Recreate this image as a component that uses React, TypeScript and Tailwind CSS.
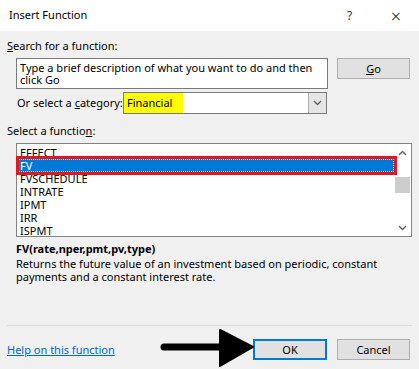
import React from 'react'

const functions = ['EFFECT', 'FV', 'FVSCHEDULE', 'INTRATE', 'IPMT', 'IRR', 'ISPMT']

const Chevron = ({ up }: { up?: boolean }) => (
  <svg width="9" height="6" viewBox="0 0 9 6" className="block">
    <path
      d={up ? 'M1 5 L4.5 1.5 L8 5' : 'M1 1 L4.5 4.5 L8 1'}
      fill="none"
      stroke="#606060"
      strokeWidth="1.4"
    />
  </svg>
)

const Button = ({ children, primary }: { children: React.ReactNode; primary?: boolean }) => (
  <button
    className={
      primary
        ? 'w-[74px] h-[21px] bg-[#e1e1e1] border-2 border-[#0078d7] text-[11px] leading-none'
        : 'w-[73px] h-[21px] bg-[#e1e1e1] border border-[#adadad] text-[11px] leading-none'
    }
  >
    {children}
  </button>
)

export default function App() {
  return (
    <div
      className="relative w-[419px] h-[369px] overflow-hidden bg-[#f0f0f0] text-black text-[11px] whitespace-nowrap"
      style={{ fontFamily: '"Noto Sans", "Open Sans", sans-serif' }}
    >
      {/* Title bar */}
      <div className="h-[31px] bg-white flex items-center pl-[9px]">
        <span className="flex-1">Insert Function</span>
        <span className="w-[10px] text-center text-[12px] text-[#333]">?</span>
        <span className="ml-[36px] mr-[18px] text-[18px] font-light leading-none text-[#222]">×</span>
      </div>

      <div className="px-[7px]">
        <div className="mt-[7px] leading-[15px]">
          <span className="underline">S</span>earch for a function:
        </div>

        <div className="mt-[5px] flex items-start">
          <div className="ml-[9px] w-[312px] h-[31px] bg-white border border-[#7a7a7a] px-[3px] pt-[3px] leading-[12px]">
            Type a brief description of what you want to do and then
            <br />
            click Go
          </div>
          <div className="ml-[9px]">
            <Button>
              <span className="underline">G</span>o
            </Button>
          </div>
        </div>

        <div className="mt-[3px] flex items-center h-[22px]">
          <span className="ml-[10px] w-[106px]">
            Or select a <span className="underline">c</span>ategory:
          </span>
          <div className="w-[204px] h-[22px] bg-white border border-[#7a7a7a] flex">
            <div className="w-[59px] h-full bg-[#ffff00] flex items-center pl-[3px]">Financial</div>
            <div className="flex-1" />
            <div className="w-[18px] h-full bg-[#e5e5e5] border-l border-[#adadad] flex items-center justify-center">
              <Chevron />
            </div>
          </div>
        </div>

        <div className="mt-[9px] leading-[15px]">
          Select a functio<span className="underline">n</span>:
        </div>

        {/* Function list */}
        <div className="relative mt-[5px] ml-[9px] w-[396px] h-[94px] bg-white border border-[#828282] flex">
          <div className="flex-1 pt-[2px] overflow-hidden">
            {functions.map((f) => (
              <div
                key={f}
                className={
                  f === 'FV'
                    ? 'h-[13px] leading-[11px] pl-[2px] bg-[#0078d7] text-white border border-dotted border-[#c0d8f0]'
                    : 'h-[13px] leading-[13px] pl-[3px]'
                }
              >
                {f}
              </div>
            ))}
          </div>
          <div className="w-[17px] h-full flex flex-col items-center">
            <div className="h-[17px] flex items-center justify-center">
              <Chevron up />
            </div>
            <div className="mt-[16px] w-[15px] h-[16px] bg-[#cdcdcd]" />
            <div className="flex-1" />
            <div className="h-[17px] flex items-center justify-center">
              <Chevron />
            </div>
          </div>
          {/* red highlight annotation */}
          <div className="absolute left-[-1px] top-[12px] w-[381px] h-[19px] border-[3px] border-[#e8141c]" />
        </div>

        <div className="mt-[4px] ml-[9px] font-bold leading-[15px]">FV(rate,nper,pmt,pv,type)</div>
        <div className="mt-[1px] ml-[9px] leading-[13px]">
          Returns the future value of an investment based on periodic, constant
          <br />
          payments and a constant interest rate.
        </div>

        <div className="mt-[42px] h-px bg-[#dcdcdc] w-[405px]" />

        <div className="mt-[13px] flex items-center">
          <a className="text-[#0066cc] underline leading-[15px]">Help on this function</a>
          <div className="flex-1" />
          <Button primary>OK</Button>
          <div className="ml-[10px] mr-[2px]">
            <Button>Cancel</Button>
          </div>
        </div>
      </div>

      {/* arrow annotation */}
      <svg className="absolute left-[158px] top-[328px]" width="98" height="40" viewBox="0 0 98 40">
        <line x1="6" y1="19" x2="66" y2="19" stroke="#000" strokeWidth="7" strokeLinecap="round" />
        <path d="M62 2 L95 19 L62 38 Z" fill="#000" strokeLinejoin="round" stroke="#000" strokeWidth="2" />
      </svg>
    </div>
  )
}
